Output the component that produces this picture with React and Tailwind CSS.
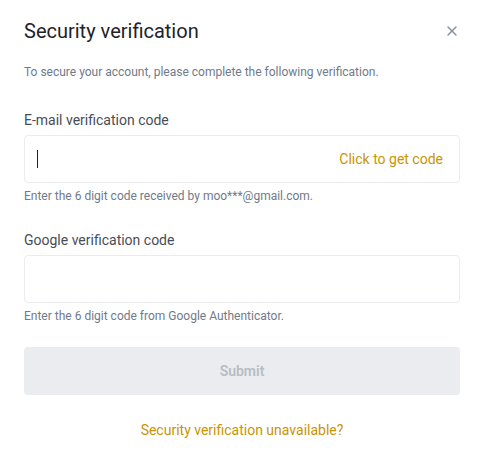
import React from 'react';
import { X } from 'lucide-react';

const Field = ({ label, hint, action, focus }) => (
    <div className="flex flex-col">
        <label className="text-[14px] leading-[20px] text-[#474d57] mb-[5px]">{label}</label>
        <div className="h-[48px] border border-[#eaecef] rounded-[4px] flex items-center pl-[12px] pr-[16px]">
            {focus && <span className="w-[1px] h-[18px] bg-[#1e2329]" />}
            <input className="flex-1 outline-none bg-transparent text-[14px] text-[#1e2329]" />
            {action && <span className="text-[14px] text-[#c99400] cursor-pointer">{action}</span>}
        </div>
        <p className="text-[12px] leading-[16px] text-[#707a8a] mt-[5px]">{hint}</p>
    </div>
);

export default function App() {
    return (
        <div className="w-[484px] h-[456px] bg-white font-['Roboto',sans-serif] px-[24px] pt-[17px]">
            {/* Header */}
            <div className="flex items-center justify-between">
                <h1 className="text-[20px] leading-[28px] text-[#1e2329]">Security verification</h1>
                <X className="w-[16px] h-[16px] text-[#848e9c]" strokeWidth={2} />
            </div>
            <p className="text-[12px] leading-[16px] text-[#707a8a] mt-[19px]">
                To secure your account, please complete the following verification.
            </p>

            <div className="mt-[30px] flex flex-col gap-[26px]">
                <Field
                    label="E-mail verification code"
                    hint="Enter the 6 digit code received by moo***@gmail.com."
                    action="Click to get code"
                    focus
                />
                <Field
                    label="Google verification code"
                    hint="Enter the 6 digit code from Google Authenticator."
                />
            </div>

            <button className="w-full h-[48px] mt-[23px] bg-[#eaecef] rounded-[4px] text-[14px] font-semibold text-[#b7bdc6]">
                Submit
            </button>

            <div className="mt-[23px] text-center">
                <span className="text-[14px] text-[#c99400]">Security verification unavailable?</span>
            </div>
        </div>
    );
}
